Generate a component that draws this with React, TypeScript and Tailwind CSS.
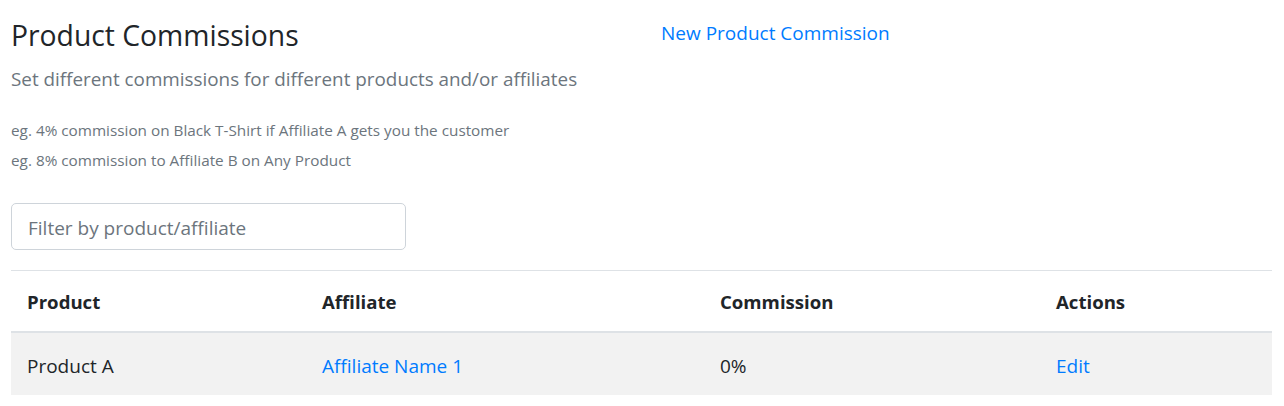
import React from "react";

const rows = [
  { product: "Product A", affiliate: "Affiliate Name 1", commission: "0%" },
];

const ProductCommissions: React.FC = () => {
  const [filter, setFilter] = React.useState("");

  return (
    <div className="min-h-[406px] bg-white pl-[11px] pr-[12px] text-[#212529] font-['Open_Sans',sans-serif]">
      <div className="flex pt-[17px]">
        <div className="w-[650px]">
          <h1 className="text-[28.3px] leading-[36px] font-normal">
            Product Commissions
          </h1>
          <p className="mt-[12px] text-[18.85px] leading-[28px] text-[#6c757d]">
            Set different commissions for different products and/or affiliates
          </p>
        </div>
        <div>
          <a href="#" className="block text-[19px] leading-[32px] text-[#007bff]">
            New Product Commission
          </a>
        </div>
      </div>

      <div className="mt-[22px] text-[15.3px] leading-[30px] text-[#6c757d]">
        <p>eg. 4% commission on Black T-Shirt if Affiliate A gets you the customer</p>
        <p>eg. 8% commission to Affiliate B on Any Product</p>
      </div>

      <input
        value={filter}
        onChange={(e) => setFilter(e.target.value)}
        placeholder="Filter by product/affiliate"
        className="mt-[28px] block h-[47px] w-[395px] rounded-[5px] border border-[#ced4da] px-[16px] pt-[2px] text-[19px] text-[#495057] placeholder:text-[#6c757d] outline-none"
      />

      <div className="mt-[20px] border-t border-[#dee2e6] text-[19px]">
        <div className="grid grid-cols-[295px_398px_336px_232px] h-[62px] items-center border-b-2 border-[#dee2e6] pt-[2px] text-[18.6px] font-bold">
          <div className="px-4">Product</div>
          <div className="px-4">Affiliate</div>
          <div className="px-4">Commission</div>
          <div className="px-4">Actions</div>
        </div>
        {rows
          .filter((r) =>
            (r.product + r.affiliate).toLowerCase().includes(filter.toLowerCase()),
          )
          .map((r) => (
            <div
              key={r.product}
              className="grid grid-cols-[295px_398px_336px_232px] h-[62px] items-center bg-[#f2f2f2] pt-[4px]"
            >
              <div className="px-4">{r.product}</div>
              <div className="px-4">
                <a href="#" className="text-[#007bff]">
                  {r.affiliate}
                </a>
              </div>
              <div className="px-4">{r.commission}</div>
              <div className="px-4">
                <a href="#" className="text-[#007bff]">
                  Edit
                </a>
              </div>
            </div>
          ))}
      </div>
    </div>
  );
};

export default function App() {
  return <ProductCommissions />;
}
